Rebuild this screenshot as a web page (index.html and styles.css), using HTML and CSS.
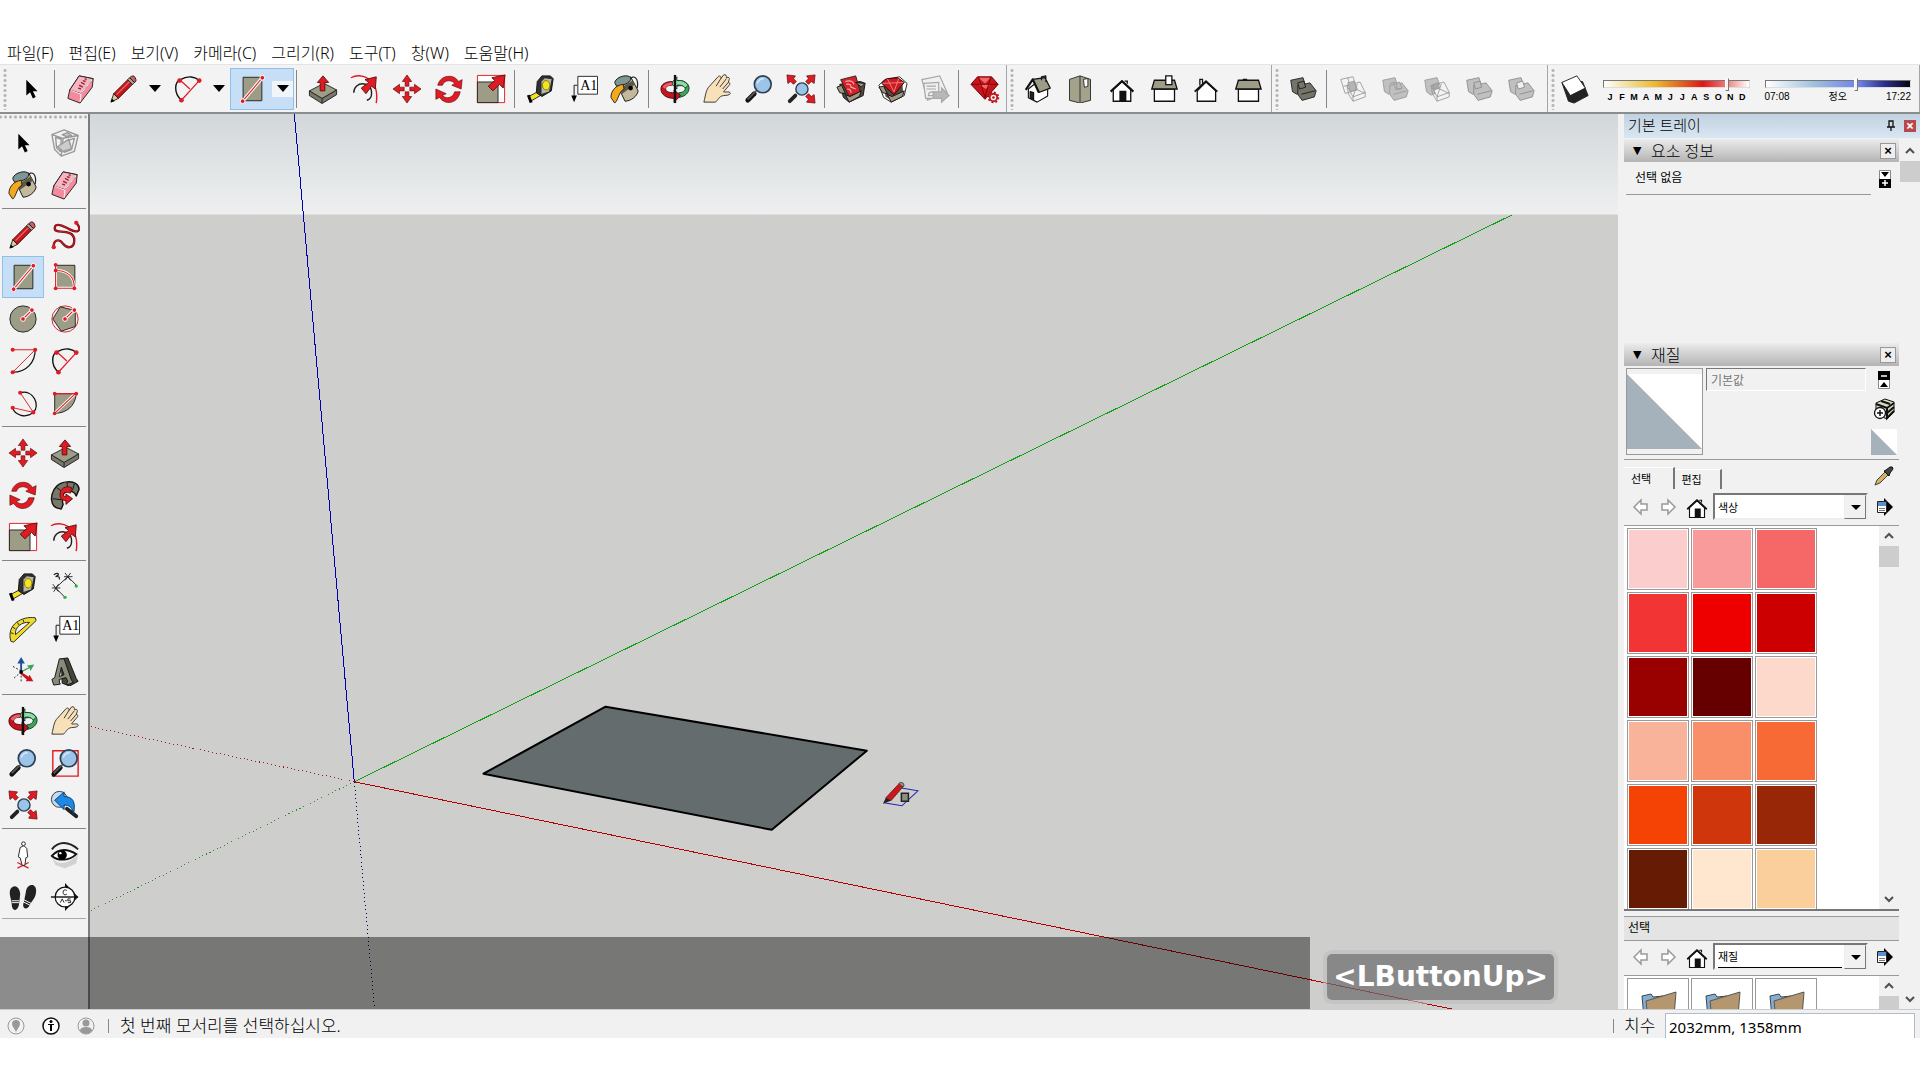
FILE: index.html
```html
<!DOCTYPE html>
<html lang="ko">
<head>
<meta charset="utf-8">
<title>모델러</title>
<link rel="stylesheet" href="styles.css">
</head>
<body>
<svg class="sprite" aria-hidden="true">
  <symbol id="cursor" viewBox="0 0 32 32"><path d="M11 6v17l4-3.500 3 6.500 3-1.500-3-6h5z"/></symbol>
  <symbol id="eraser" viewBox="0 0 32 32"><g stroke="#222" stroke-linejoin="round"><path fill="#f7899d" d="M14 2l15 3-1 9-13 17-13-5 2-9z"/><path fill="#f9b4c0" d="M14 2l15 3-13 16-12-4z"/><path fill="none" stroke="#fff" d="M5 17.500l11 4-1 8M16 21L28 6"/></g><path fill="none" stroke="#8c3040" stroke-width="1.500" d="M13 15l3 1M14 12l4 2M16 9l4 2M18 7l3 1M20 5l2 1"/></symbol>
  <symbol id="pencil" viewBox="0 0 32 32"><path fill="#d9c9a0" stroke="#222" d="M2 30l3-9 5 5z"/><path d="M2 30l1-4 3 3z"/><path fill="#c4161c" stroke="#301010" d="M5 21L20 6l5 5-15 15z"/><path stroke="#f06060" stroke-width="1.500" d="M8 22L22 8"/><path fill="#b0b0b0" stroke="#222" d="M20 6l2-2 5 5-2 2z"/><path fill="#c86060" stroke="#301010" d="M22 4q4-4 6 0t-1 5z"/></symbol>
  <symbol id="arc" viewBox="0 0 32 32"><path fill="none" stroke="#111" stroke-width="1.500" d="M9 28C0 20 2 8 8 6c8-5 16-3 20 1"/><path fill="none" stroke="#e01b24" stroke-width="1.300" d="M8 7l10 9M9 28L28 7"/><g fill="#e01b24"><circle cx="7" cy="7" r="2.500"/><circle cx="28" cy="7" r="2.500"/><circle cx="9" cy="28" r="2.500"/></g></symbol>
  <symbol id="rect" viewBox="0 0 32 32"><path fill="#9c9c87" stroke="#222" d="M6.500 3.500h20v25h-20z"/><path stroke="#fff" stroke-width="3.500" d="M6 29L27 4"/><path stroke="#e01b24" stroke-width="1.200" d="M6 29L27 4"/><g fill="#e01b24" stroke="#fff"><circle cx="6" cy="29" r="2.500"/><circle cx="27" cy="4" r="2.500"/></g></symbol>
  <symbol id="rrect" viewBox="0 0 32 32"><path fill="#9c9c87" stroke="#222" d="M6.500 3.500h20v25h-20z"/><path fill="none" stroke="#fff" stroke-width="3" d="M6 9c14 0 20 8 20 19H6V3"/><path fill="none" stroke="#e01b24" stroke-width="1.200" d="M6 9c14 0 20 8 20 19H6V3"/><g fill="#e01b24"><circle cx="6" cy="3" r="2"/><circle cx="6" cy="9" r="2"/><circle cx="6" cy="28" r="2"/><circle cx="26" cy="28" r="2"/></g></symbol>
  <symbol id="circle" viewBox="0 0 32 32"><circle cx="16" cy="16" r="14" fill="#9c9c87" stroke="#222"/><path stroke="#fff" stroke-width="3.500" d="M16 16l9-9"/><path stroke="#e01b24" stroke-width="1.200" d="M16 16l9-9"/><g fill="#e01b24" stroke="#fff"><circle cx="16" cy="16" r="2.500"/><circle cx="25.500" cy="6.500" r="2.500"/></g></symbol>
  <symbol id="polygon" viewBox="0 0 32 32"><circle cx="16" cy="16" r="14" fill="none" stroke="#e01b24"/><path fill="#9c9c87" stroke="#222" d="M27 7L11 3 3 16l9 13 15-5z"/><path stroke="#fff" stroke-width="3.500" d="M16 16l9-9"/><path stroke="#e01b24" stroke-width="1.200" d="M16 16l9-9"/><g fill="#e01b24" stroke="#fff"><circle cx="16" cy="16" r="2.500"/><circle cx="26" cy="6.500" r="2.500"/></g></symbol>
  <symbol id="arc2" viewBox="0 0 32 32"><path fill="none" stroke="#111" stroke-width="1.300" d="M29 4c0 13-9 24-24 24"/><path fill="none" stroke="#e01b24" d="M5 4h24L5 28"/><g fill="#e01b24"><circle cx="5" cy="4" r="2.200"/><circle cx="29" cy="4" r="2.200"/><circle cx="5" cy="28" r="2.200"/></g></symbol>
  <symbol id="arc3" viewBox="0 0 32 32"><path fill="none" stroke="#111" stroke-width="1.300" d="M13 5c14-4 22 14 14 21s-20 3-22-5"/><path fill="none" stroke="#e01b24" d="M13 5l14 21L5 21"/><g fill="#e01b24"><circle cx="13" cy="5" r="2.200"/><circle cx="27" cy="26" r="2.200"/><circle cx="5" cy="21" r="2.200"/></g></symbol>
  <symbol id="pie" viewBox="0 0 32 32"><path fill="#9c9c87" stroke="#222" d="M5 6h23c-1 13-10 21-23 21z"/><path stroke="#fff" stroke-width="3" d="M5 27L27 6"/><path fill="none" stroke="#e01b24" stroke-width="1.200" d="M5 6h22L5 27"/><g fill="#e01b24"><circle cx="5" cy="6" r="2"/><circle cx="28" cy="6" r="2"/><circle cx="5" cy="27" r="2"/></g></symbol>
  <symbol id="freehand" viewBox="0 0 32 32"><path fill="none" stroke="#701016" stroke-width="2.500" d="M28 3c8 9 0 11-7 7S5 2 5 9c0 5 9 2 16 5s6 14 0 15-7-6-11-7-7 2-6 8"/><path fill="none" stroke="#e01b24" d="M28 3c8 9 0 11-7 7S5 2 5 9c0 5 9 2 16 5s6 14 0 15-7-6-11-7-7 2-6 8"/><g fill="#e01b24"><circle cx="28" cy="3" r="2.300"/><circle cx="4" cy="29" r="2.300"/></g></symbol>
  <symbol id="push" viewBox="0 0 32 32"><path fill="#77776a" stroke="#222" stroke-linejoin="round" d="M1.500 18v5L15 31.500 30.500 22v-5L15 26z"/><path fill="#9c9c87" stroke="#222" stroke-linejoin="round" d="M1.500 18L17 10l13.500 7L15 26zM15 26v5"/><path fill="#e01b24" stroke="#601010" d="M16 2l6 7h-4v9h-5V9H10z"/></symbol>
  <symbol id="offset" viewBox="0 0 32 32"><path fill="none" stroke="#e01b24" stroke-width="1.500" d="M1 4c10-6 31 0 27 27"/><path fill="none" stroke="#222" stroke-width="1.500" d="M4 20c0-13 20-13 19 1 0 4-2 6-5 7"/><path fill="#e01b24" stroke="#601010" stroke-linejoin="round" d="M28 3l-1 13-4-3-6 8-5-6 8-6-4-3z"/></symbol>
  <symbol id="move" viewBox="0 0 32 32"><path fill="#e01b24" stroke="#601010" stroke-width=".7" d="M16 1l5 7h-3v5h-4V8h-3zM16 31l5-7h-3v-5h-4v5h-3zM1 16l7-5v3h5v4H8v3zM31 16l-7-5v3h-5v4h5v3z"/></symbol>
  <symbol id="rotate" viewBox="0 0 32 32"><path fill="#e01b24" stroke="#601010" stroke-width=".7" d="M4 12C7 0 22 0 26 8l4-2-1 10-10-4 3-2C19 6 11 6 9 12zM28 19c-3 14-17 14-22 6l-4 2V16l11 5-4 2c4 4 11 3 13-4z"/></symbol>
  <symbol id="scale" viewBox="0 0 32 32"><path fill="#fff" stroke="#e01b24" d="M1.500 1.500h29v29h-29z"/><path fill="#9c9c87" stroke="#222" d="M1.500 8.500h22v22h-22z"/><path fill="#e01b24" stroke="#601010" stroke-linejoin="round" d="M31 1l-2 14-4-4-7 7-5-5 7-6-3-3z"/></symbol>
  <symbol id="tape" viewBox="0 0 32 32"><path fill="#f4e520" stroke="#222" d="M3 24l11-6 3 4L5 29z"/><path d="M1 23l3-1 3 8-3 1z"/><path fill="#303030" stroke="#111" d="M12 8l5-6h9l3 3-2 13-10 6-6-4z"/><path fill="#b8b8a8" stroke="#222" d="M16 8l4-4 8 1-3 14-9 3z"/><ellipse cx="21.500" cy="12" rx="4" ry="5" fill="#f4e520" stroke="#80780c"/></symbol>
  <symbol id="text" viewBox="0 0 32 32"><path fill="#fff" stroke="#222" d="M10.500 2.500h21v19h-21z"/><path fill="none" stroke="#111" d="M10 12H6.500v12"/><path d="M3.500 23h6l-3 7z"/><path stroke="none" d="M0 0"/><text class="mark" x="13" y="17">A1</text></symbol>
  <symbol id="paint" viewBox="0 0 32 32"><path fill="none" stroke="#222" stroke-width="1.300" d="M21 6c4-6 10-2 8 9"/><path fill="#c3b899" stroke="#111" stroke-linejoin="round" d="M6 8l16-5 8 15c-1 6-8 11-14 11z"/><path fill="#5c5848" d="M10 16l14-9 3 4-14 10z"/><path fill="#7d9696" stroke="#111" d="M5 9c2-7 15-9 17-5 1 4-5 8-15 9z"/><path fill="#f2a91c" stroke="#222" d="M14 11C6 12 1 18 1 25l4 6c4-3 4-12 10-15z"/><circle cx="22" cy="15" r="2.500"/></symbol>
  <symbol id="orbit" viewBox="0 0 32 32"><path fill="#3ba55c" stroke="#12401f" d="M17 7c8-1 14 3 14 8s-4 9-11 10v-5c4 0 7-2 7-5s-4-3-10-2z"/><path fill="#8fdcab" stroke="#12401f" d="M18 3l-6 7 6 6v-4q6-1 9 3l3-3q-4-6-12-5z"/><path fill="#c4161c" stroke="#4a0c10" d="M13 8C6 8 1 11 1 16c0 6 6 10 14 10v4l7-7-7-6v3c-5 0-9-1-9-4s3-4 7-4z"/><path fill="#e86070" d="M13 9C7 9 3 12 3 14l3 2c0-3 3-4 7-4z"/><path stroke="#111" stroke-width="2.500" d="M16 1v30"/></symbol>
  <symbol id="hand" viewBox="0 0 32 32"><path fill="#f8e1b8" stroke="#333" stroke-linejoin="round" d="M2 30c2-8 2-13 6-17L17 3c2-2 4 0 3 2l3-4c2-1 4 1 3 3 2-1 4 0 3 2l-1 3c2 0 2 2 1 3l-6 7c3 1 6-1 7 1s-3 3-7 3c-6 1-5 5-9 7z"/><path fill="none" stroke="#333" d="M20 5l-5 8M26 5l-7 9M28 9l-6 7"/></symbol>
  <symbol id="zoom" viewBox="0 0 32 32"><path stroke="#111" stroke-width="5" stroke-linecap="round" d="M4 28l7-7"/><path stroke="#555" stroke-width="2" d="M4 27l9-9"/><circle cx="20" cy="11" r="9" fill="#9cc3e8" stroke="#2c4052" stroke-width="1.800"/><path fill="none" stroke="#d8ebfa" stroke-width="1.500" d="M14 10q2-5 7-5"/></symbol>
  <symbol id="extents" viewBox="0 0 32 32"><path stroke="#222" stroke-width="4" stroke-linecap="round" d="M4 29l6-6"/><circle cx="17" cy="16" r="6.500" fill="#9cc3e8" stroke="#2c4052" stroke-width="1.500"/><path fill="#e01b24" stroke="#601010" stroke-width=".8" d="M1 1l9 1-2 3 3 3-3 3-3-3-3 2zM31 1l-9 1 2 3-3 3 3 3 3-3 3 2zM31 31l-9-1 2-3-3-3 3-3 3 3 3-2z"/></symbol>
  <symbol id="boxget" viewBox="0 0 32 32"><path fill="#544a40" stroke="#111" stroke-linejoin="round" d="M4 11l4 14 6 5 15-7 2-13-5-2z"/><path fill="#d5232b" stroke="#222" d="M5 6l16-4 5 17-12 5z"/><path fill="none" stroke="#f7b0b0" stroke-width="1.300" d="M10 8q8-2 9 3M11 11q5-1 5 3l5 2M12 16q4 0 4 4"/><path fill="#a09684" stroke="#111" stroke-linejoin="round" d="M21 9l10 1-4 4zM1 14l5-2 4 9-6-1zM10 22l5 2 12-6-2 6-11 6z"/></symbol>
  <symbol id="boxgem" viewBox="0 0 32 32"><path fill="#fff" stroke="#222" stroke-linejoin="round" d="M1 12l6-6 16-3 8 7-3 13-14 7-8-5z"/><path fill="#544a40" d="M6 13l20-3 1 12-13 6-6-4z"/><path fill="#c81a22" stroke="#300" d="M4 10l5-5 12-1 7 5-11 13z"/><path fill="none" stroke="#f58080" d="M5 10l22-1M10 5l7 14 5-14"/><path fill="#a09684" stroke="#111" stroke-linejoin="round" d="M1 14l5-1 4 8-5-1zM10 22l5 2 13-6-2 6-12 6z"/></symbol>
  <symbol id="layout" viewBox="0 0 32 32"><g fill="#f0f0f0" stroke="#a8a8a8" stroke-width="1.300"><path d="M2 6l19-4 8 18-21 8z"/><path d="M4 10l16-1v17H6z"/><path d="M7 13h10M7 16h10M9 23q0-4 4-4t3 4z"/><path fill="#b8b8b8" d="M14 19h9v-4l8 8-8 7v-4h-9z"/></g></symbol>
  <symbol id="ruby" viewBox="0 0 32 32"><path fill="#c8141c" stroke="#600" d="M1 11l7-8h15l7 8-14 16z"/><path fill="#ee6a6a" d="M9 4l7 6 6-6zM9 11h13l-5 5z"/><path fill="none" stroke="#800" d="M2 11h27M9 3l7 22 6-22"/><circle cx="25" cy="25" r="4" fill="#f2f2f2" stroke="#c8141c" stroke-width="2"/><circle cx="25" cy="25" r="5.500" fill="none" stroke="#a01018" stroke-width="1.500" stroke-dasharray="2 2.300"/><circle cx="25" cy="25" r="1.300" fill="#a01018"/></symbol>
  <symbol id="iso" viewBox="0 0 32 32"><g stroke="#111" stroke-width="1.300" stroke-linejoin="round"><path fill="#fff" d="M5 16v10l10 5 12-7V14L15 8z"/><path fill="#9c9c87" d="M10 5l14-2 6 12-13 5zM20 6V2l5-1v7"/><path fill="none" stroke-width="2.500" d="M2 17l8-12 7 15"/><path fill="#222" d="M7 19l4 1v8l-4-2z"/></g></symbol>
  <symbol id="topv" viewBox="0 0 32 32"><g stroke="#222" stroke-linejoin="round"><path fill="#a3a38c" d="M4 5l12-4 12 4v24l-12 3-12-3z"/><path d="M16 1v30"/><path fill="#fff" d="M20 5l5-1v9l-4 1z"/></g></symbol>
  <symbol id="home" viewBox="0 0 32 32"><path fill="#fff" stroke="#111" stroke-width="1.500" d="M6 16l10-9 10 9v14H6zM22 10V7h-3"/><path fill="none" stroke="#111" stroke-width="2.500" d="M3 19L16 7l13 12"/><path fill="#111" d="M13 18h8v12h-8z"/></symbol>
  <symbol id="right" viewBox="0 0 32 32"><path fill="#fff" stroke="#111" stroke-width="1.500" d="M5 16h23v14H5z"/><path fill="#9c9c87" stroke="#111" stroke-width="1.500" d="M5 6h23l3 10H2z"/><path fill="#fff" stroke="#111" stroke-width="1.500" d="M18 1h7v10h-7z"/></symbol>
  <symbol id="back" viewBox="0 0 32 32"><path fill="#fff" stroke="#111" stroke-width="1.500" d="M6 18L16 8l11 10v12H6zM9 12V5h3v5"/><path fill="none" stroke="#111" stroke-width="2" d="M3 19L16 7l13 12"/></symbol>
  <symbol id="left" viewBox="0 0 32 32"><path fill="#fff" stroke="#111" stroke-width="1.500" d="M5 16h23v14H5z"/><path fill="#9c9c87" stroke="#111" stroke-width="1.500" d="M5 6h23l3 10H2zM10 5h5"/></symbol>
  <symbol id="solid" viewBox="0 0 32 32"><g fill="currentColor" stroke="var(--edge)" stroke-linejoin="round"><path d="M2 6l14-3 4 13-11 6-5-3z"/><path d="M10 12l14-3 7 9-2 7-14 4-5-7z"/><path d="M10 9l7-2 2 7-7 2zM14 22l16-4"/></g></symbol>
  <symbol id="solidwire" viewBox="0 0 32 32"><g fill="none" stroke="#999" stroke-linejoin="round"><path d="M2 5l14-3 5 15-14 4zM9 12l15-4 6 12-14 5zM16 25v5l14-5v-5M5 13l12-3M10 3l4 16M9 12l2 10 5 8M21 10l-2 6 11 5M16 25l3-9"/><path fill="#b5b5b5" d="M10 9l7-2 3 9-7 3z"/></g></symbol>
  <symbol id="solidin" viewBox="0 0 32 32"><g fill="#c0c0c0" stroke="#999" stroke-linejoin="round"><path d="M2 6l14-3 4 13-11 6-5-3z"/><path d="M10 12l14-3 7 9-2 7-14 4-5-7z"/><path d="M14 22l16-4M15 10l6-2 3 7-7 2zM18 9v6l5 1M10 10l6-2"/></g></symbol>
  <symbol id="solidsub" viewBox="0 0 32 32"><g fill="none" stroke="#999" stroke-linejoin="round"><path fill="#c0c0c0" d="M2 6l14-3 3 8-8 2 3 8-5 2-5-4z"/><path d="M9 12l15-4 6 12-14 5zM16 25v5l14-5v-5M9 12l2 10 5 8M21 10l-2 6 11 5M16 25l3-9"/><path fill="#a8a8a8" d="M11 11l6-2 2 6-6 2z"/></g></symbol>
  <symbol id="solidsplit" viewBox="0 0 32 32"><g fill="#c0c0c0" stroke="#8c8c8c" stroke-linejoin="round"><path d="M2 6l14-3 4 13-11 6-5-3z"/><path d="M10 12l14-3 7 9-2 7-14 4-5-7z"/><path d="M14 22l16-4"/><path fill="#f0f0f0" d="M11 9l7-2 2 7-7 2z"/></g></symbol>
  <symbol id="sunbox" viewBox="0 0 32 32"><path fill="#222" stroke="#222" d="M2 9l7 20 6 2 15-8-6-15z"/><path fill="#fff" stroke="#222" d="M2 9l16-7 9 13-16 8z"/></symbol>
  <symbol id="component" viewBox="0 0 32 32"><g fill="none" stroke="#999" stroke-width="1.500" stroke-linejoin="round"><path d="M2 7l13-5 15 6-4 17-14 5L5 23zM2 7l12 4 16-3M14 11l-2 19M6 10l6 2-1 13-4-4zM17 14l9-3-3 12-8 3z"/><path fill="#ccc" d="M8 20l12-8 3 10-9 3zM13 7l6-2 4 3-6 1z"/></g></symbol>
  <symbol id="follow" viewBox="0 0 32 32"><path fill="#77776a" stroke="#111" stroke-width="1.500" stroke-linejoin="round" d="M8 30C-3 27 0 3 18 2c8-1 13 3 13 8l-3 7c-3-9-19-7-14 9l-2 5z"/><path fill="none" stroke="#111" d="M3 20l9 1M7 8l7 5M18 2l1 8M26 4l-2 7"/><path fill="#e01b24" stroke="#601010" d="M23 8C10 3 6 22 17 22v4l7-6-7-5v3c-5-1-4-7 5-4z"/></symbol>
  <symbol id="dim" viewBox="0 0 32 32"><path fill="none" stroke="#222" d="M6 17l13-12M6 17l10 10M19 5l9 9M2 17h9M15 5h9M3 13l6 8M9 13l-5 8M16 1l6 8M22 1l-6 8"/><path fill="none" stroke="#222" stroke-width="1.300" d="M4 3q5-3 5 0l-3 2q5-1 4 3"/><circle cx="16" cy="27" r="1.800" fill="#2eb34a"/><circle cx="28" cy="15" r="1.800" fill="#2eb34a"/></symbol>
  <symbol id="protractor" viewBox="0 0 32 32"><path fill="#eedb2c" stroke="#222" stroke-linejoin="round" d="M3 29C-2 11 15 2 29 4l1 3L6 30zM8 22C7 14 15 8 23 9z" fill-rule="evenodd"/><path fill="none" stroke="#222" d="M3 20l3 1M5 14l3 2M10 9l2 3M16 6l1 3"/></symbol>
  <symbol id="axes" viewBox="0 0 32 32"><path stroke="#222" stroke-dasharray="2 2" d="M14 16L5 11M14 17L6 24M14 17v12"/><path fill="#1d4f9c" d="M13 16V8h-3l4-7 4 7h-3v8z"/><path fill="#3ba55c" d="M14 16l8-4-2-2 8-1-4 7-1-3-8 4z"/><path fill="#c4161c" d="M14 17l8 5 1-2 4 7h-8l1-2-7-6z"/><circle cx="14" cy="17" r="2"/></symbol>
  <symbol id="text3d" viewBox="0 0 32 32"><path fill="#44443c" stroke="#111" stroke-linejoin="round" d="M12 3l7-1 9 22 2 3-9 5-8-3z"/><path fill="#8a8a7a" stroke="#111" stroke-linejoin="round" fill-rule="evenodd" d="M2 25l3-2 5-20h5l8 23 2 2-7 3v-2l1-2-2-4-7 2v3l1 2-7 1zM12 12l-2 10 5-2z"/></symbol>
  <symbol id="zoomwin" viewBox="0 0 32 32"><path fill="none" stroke="#e01b24" stroke-width="1.500" d="M3 3h27v27H3z"/><use href="#zoom"/></symbol>
  <symbol id="previous" viewBox="0 0 32 32"><circle cx="10" cy="10" r="8.500" fill="#c6dcee" stroke="#334"/><path stroke="#222" stroke-width="4" stroke-linecap="round" d="M18 20l10 8"/><path fill="#1e88e5" stroke="#0b3c6b" d="M5 11l10-9v5c9 0 13 5 10 19-1-7-4-10-10-10v5z"/></symbol>
  <symbol id="person" viewBox="0 0 32 32"><path fill="none" stroke="#e01b24" stroke-width="1.300" d="M10 24l12 6M22 24l-12 6"/><path fill="#fff" stroke="#222" d="M13 8l4-2 3 3 1 9-2 1-1 8h-3l-2-8-2-1z"/><circle cx="16.500" cy="4" r="2" fill="#fff" stroke="#222"/></symbol>
  <symbol id="eye" viewBox="0 0 32 32"><path fill="none" stroke="#222" stroke-width="2" d="M2 10c7-9 18-9 28 0"/><path fill="#bbb" d="M2 19c6 8 17 8 28-4l-2 10-12 5-10-3z" opacity=".6"/><path fill="#fff" stroke="#111" stroke-width="2" d="M2 17c7-8 16-8 26-2-7 7-19 8-26 2z"/><circle cx="13" cy="16" r="5"/><circle cx="11" cy="14" r="1.300" fill="#fff"/></symbol>
  <symbol id="feet" viewBox="0 0 32 32"><path fill="#222" d="M3 7c5-6 10 0 10 6l-1 9c-1 10-8 10-8 2 0-5-4-12-1-17zM19 11c1-10 11-10 11-2 0 8-4 10-7 16-3 6-9 3-6-4z"/><path stroke="#fff" d="M4 20h8M4 22h8M17 19l8 4M16 21l8 4"/></symbol>
  <symbol id="section" viewBox="0 0 32 32"><path fill="#111" d="M16 1l14 15-14 15z"/><circle cx="16" cy="16" r="10.500" fill="#fff" stroke="#111" stroke-width="1.300"/><path stroke="#111" stroke-width="1.500" d="M1 16h29"/><path fill="none" stroke="#222" d="M18 9q-4-2-4 2t4 2M11 22l2-4 2 4M16 20h2M22 18h-3v2h3v2h-3"/></symbol>
  <symbol id="prev" viewBox="0 0 20 20"><path fill="#fff" stroke="#999" stroke-width="1.500" d="M3 10l7-7v4h6v6h-6v4z"/></symbol>
  <symbol id="next" viewBox="0 0 20 20"><path fill="#fff" stroke="#999" stroke-width="1.500" d="M17 10l-7-7v4H4v6h6v4z"/></symbol>
  <symbol id="details" viewBox="0 0 20 20"><path d="M9 1l9 9-9 9z"/><path fill="#fff" stroke="#222" d="M2.500 4.500h9v11h-9z"/><path fill="#5b8fd0" d="M3 5h8v4H3z"/><path stroke="#777" d="M4 11.500h6M4 13.500h6"/></symbol>
  <symbol id="up" viewBox="0 0 20 20"><path fill="none" stroke="#505050" stroke-width="2" d="M6 12l4-4 4 4"/></symbol>
  <symbol id="down" viewBox="0 0 20 20"><path fill="none" stroke="#505050" stroke-width="2" d="M6 8l4 4 4-4"/></symbol>
  <symbol id="folder" viewBox="0 0 40 40"><path fill="#82afd3" stroke="#444" d="M2 7l9-2 2 3 10-1v33H5z"/><path fill="#b4976f" stroke="#555" d="M6 12l30-9-3 37H9z"/></symbol>
</svg>

<div class="app">
  <nav class="menu">
    <a href="#">파일(F)</a><a href="#">편집(E)</a><a href="#">보기(V)</a><a href="#">카메라(C)</a><a href="#">그리기(R)</a><a href="#">도구(T)</a><a href="#">창(W)</a><a href="#">도움말(H)</a>
  </nav>

  <header class="toolbar">
    <div class="group">
      <i class="grip"></i>
      <button class="tool" aria-label="선택"><svg><use href="#cursor"/></svg></button>
      <i class="sep"></i>
      <button class="tool" aria-label="지우개"><svg><use href="#eraser"/></svg></button>
      <div class="split"><button class="tool" aria-label="선"><svg><use href="#pencil"/></svg></button><button class="drop" aria-label="선 도구"></button></div>
      <div class="split"><button class="tool" aria-label="호"><svg><use href="#arc"/></svg></button><button class="drop" aria-label="호 도구"></button></div>
      <div class="split active"><button class="tool" aria-label="직사각형"><svg><use href="#rect"/></svg></button><button class="drop" aria-label="도형 도구"></button></div>
      <i class="sep"></i>
      <button class="tool" aria-label="밀기/끌기"><svg><use href="#push"/></svg></button>
      <button class="tool" aria-label="오프셋"><svg><use href="#offset"/></svg></button>
      <button class="tool" aria-label="이동"><svg><use href="#move"/></svg></button>
      <button class="tool" aria-label="회전"><svg><use href="#rotate"/></svg></button>
      <button class="tool" aria-label="배율"><svg><use href="#scale"/></svg></button>
      <i class="sep"></i>
      <button class="tool" aria-label="줄자"><svg><use href="#tape"/></svg></button>
      <button class="tool" aria-label="텍스트"><svg><use href="#text"/></svg></button>
      <button class="tool" aria-label="페인트"><svg><use href="#paint"/></svg></button>
      <i class="sep"></i>
      <button class="tool" aria-label="궤도"><svg><use href="#orbit"/></svg></button>
      <button class="tool" aria-label="팬"><svg><use href="#hand"/></svg></button>
      <button class="tool" aria-label="확대"><svg><use href="#zoom"/></svg></button>
      <button class="tool" aria-label="전체 보기"><svg><use href="#extents"/></svg></button>
      <i class="sep"></i>
      <button class="tool" aria-label="모델 가져오기"><svg><use href="#boxget"/></svg></button>
      <button class="tool" aria-label="확장 저장소"><svg><use href="#boxgem"/></svg></button>
      <button class="tool" aria-label="레이아웃"><svg><use href="#layout"/></svg></button>
      <i class="sep"></i>
      <button class="tool" aria-label="확장 관리자"><svg><use href="#ruby"/></svg></button>
    </div>
    <div class="group views">
      <i class="grip"></i>
      <button class="tool" aria-label="등각"><svg><use href="#iso"/></svg></button>
      <button class="tool" aria-label="위"><svg><use href="#topv"/></svg></button>
      <button class="tool" aria-label="정면"><svg><use href="#home"/></svg></button>
      <button class="tool" aria-label="오른쪽"><svg><use href="#right"/></svg></button>
      <button class="tool" aria-label="뒤"><svg><use href="#back"/></svg></button>
      <button class="tool" aria-label="왼쪽"><svg><use href="#left"/></svg></button>
    </div>
    <div class="group solids">
      <i class="grip"></i>
      <button class="tool dark" aria-label="외부 쉘"><svg><use href="#solid"/></svg></button>
      <i class="sep"></i>
      <button class="tool" aria-label="교차"><svg><use href="#solidwire"/></svg></button>
      <button class="tool" aria-label="결합"><svg><use href="#solidin"/></svg></button>
      <button class="tool" aria-label="빼기"><svg><use href="#solidsub"/></svg></button>
      <button class="tool" aria-label="트림"><svg><use href="#solid"/></svg></button>
      <button class="tool" aria-label="분할"><svg><use href="#solidsplit"/></svg></button>
    </div>
    <div class="group shadows">
      <i class="grip"></i>
      <button class="tool" aria-label="그림자"><svg><use href="#sunbox"/></svg></button>
      <div class="slider">
        <input class="date" type="range" min="0" max="100" value="86" aria-label="날짜">
        <div class="months"><span>J</span><span>F</span><span>M</span><span>A</span><span>M</span><span>J</span><span>J</span><span>A</span><span>S</span><span>O</span><span>N</span><span>D</span></div>
      </div>
      <div class="slider">
        <input class="time" type="range" min="0" max="100" value="63" aria-label="시간">
        <div class="hours"><span>07:08</span><span>정오</span><span>17:22</span></div>
      </div>
    </div>
  </header>

  <main class="work">
    <aside class="palette">
      <div class="pgroup">
        <button class="tool" aria-label="선택"><svg><use href="#cursor"/></svg></button><button class="tool" aria-label="구성 요소"><svg><use href="#component"/></svg></button>
        <button class="tool" aria-label="페인트"><svg><use href="#paint"/></svg></button><button class="tool" aria-label="지우개"><svg><use href="#eraser"/></svg></button>
      </div>
      <div class="pgroup">
        <button class="tool" aria-label="선"><svg><use href="#pencil"/></svg></button><button class="tool" aria-label="자유곡선"><svg><use href="#freehand"/></svg></button>
        <button class="tool active" aria-label="직사각형"><svg><use href="#rect"/></svg></button><button class="tool" aria-label="회전된 직사각형"><svg><use href="#rrect"/></svg></button>
        <button class="tool" aria-label="원"><svg><use href="#circle"/></svg></button><button class="tool" aria-label="다각형"><svg><use href="#polygon"/></svg></button>
        <button class="tool" aria-label="호"><svg><use href="#arc2"/></svg></button><button class="tool" aria-label="2점 호"><svg><use href="#arc"/></svg></button>
        <button class="tool" aria-label="3점 호"><svg><use href="#arc3"/></svg></button><button class="tool" aria-label="파이"><svg><use href="#pie"/></svg></button>
      </div>
      <div class="pgroup">
        <button class="tool" aria-label="이동"><svg><use href="#move"/></svg></button><button class="tool" aria-label="밀기/끌기"><svg><use href="#push"/></svg></button>
        <button class="tool" aria-label="회전"><svg><use href="#rotate"/></svg></button><button class="tool" aria-label="따라가기"><svg><use href="#follow"/></svg></button>
        <button class="tool" aria-label="배율"><svg><use href="#scale"/></svg></button><button class="tool" aria-label="오프셋"><svg><use href="#offset"/></svg></button>
      </div>
      <div class="pgroup">
        <button class="tool" aria-label="줄자"><svg><use href="#tape"/></svg></button><button class="tool" aria-label="치수"><svg><use href="#dim"/></svg></button>
        <button class="tool" aria-label="각도기"><svg><use href="#protractor"/></svg></button><button class="tool" aria-label="텍스트"><svg><use href="#text"/></svg></button>
        <button class="tool" aria-label="축"><svg><use href="#axes"/></svg></button><button class="tool" aria-label="3D 텍스트"><svg><use href="#text3d"/></svg></button>
      </div>
      <div class="pgroup">
        <button class="tool" aria-label="궤도"><svg><use href="#orbit"/></svg></button><button class="tool" aria-label="팬"><svg><use href="#hand"/></svg></button>
        <button class="tool" aria-label="확대"><svg><use href="#zoom"/></svg></button><button class="tool" aria-label="창 확대"><svg><use href="#zoomwin"/></svg></button>
        <button class="tool" aria-label="전체 보기"><svg><use href="#extents"/></svg></button><button class="tool" aria-label="이전"><svg><use href="#previous"/></svg></button>
      </div>
      <div class="pgroup">
        <button class="tool" aria-label="카메라 배치"><svg><use href="#person"/></svg></button><button class="tool" aria-label="둘러보기"><svg><use href="#eye"/></svg></button>
        <button class="tool" aria-label="걷기"><svg><use href="#feet"/></svg></button><button class="tool" aria-label="단면"><svg><use href="#section"/></svg></button>
      </div>
    </aside>

    <section class="viewport">
      <svg class="scene" viewBox="91 115 1528 894" preserveAspectRatio="xMinYMin slice">
        <g fill="none" stroke-width="1" shape-rendering="crispEdges">
          <path stroke="#0000b0" d="M295 114L355 782"/>
          <path stroke="#000060" stroke-dasharray="1 3" d="M355 782L375 1006"/>
          <path stroke="#14a014" d="M355 782L1511 216"/>
          <path stroke="#2c8c2c" stroke-dasharray="1 3" d="M355 782L91 911"/>
          <path stroke="#b40000" d="M355 782L1451 1009"/>
          <path stroke="#a01818" stroke-dasharray="1 3" d="M355 782L91 727"/>
        </g>
        <path fill="#646c6e" stroke="#000" stroke-width="2" stroke-linejoin="round" d="M606 707L867 751 772 830 484 774z"/>
        <path fill="none" stroke="#2020b8" d="M884 803l18 3 16-15-18-3"/>
        <path fill="#8f8f80" stroke="#222" stroke-width="1.500" d="M901.500 793.500h7v8h-7z"/>
        <path fill="#c81a1e" stroke="#701010" stroke-width=".8" d="M886 798l14-15 4 3-13 15z"/>
        <path fill="#222" d="M883 804l3-6 5 3z"/><path fill="#999" stroke="#333" stroke-width=".8" d="M900 783q4-1 4 3l-1 1-4-3z"/>
      </svg>
      <div class="keycast">&lt;LButtonUp&gt;</div>
    </section>

    <aside class="tray">
      <div class="tray-title"><span>기본 트레이</span>
        <button class="pin" aria-label="고정"><svg viewBox="0 0 10 12"><path fill="none" stroke="#111" stroke-width="1.300" d="M3 1h4v6H3zM1 7h8M5 7v4"/></svg></button>
        <button class="exit" aria-label="닫기">×</button></div>
      <div class="tray-body">
        <div class="panels">
          <h2 class="head"><span class="tri">▼</span>요소 정보<button aria-label="요소 정보 닫기">×</button></h2>
          <div class="entity">
            <p>선택 없음</p>
            <button class="toggle" aria-label="자세히"><svg viewBox="0 0 12 18"><path fill="#fff" stroke="#888" d="M.5 .5h11v17H.500z"/><path d="M2 2h8L6 7zM0 9h12v9H0z"/><path stroke="#fff" stroke-width="1.500" d="M3 13h6M6 10v6"/></svg></button>
          </div>
          <h2 class="head"><span class="tri">▼</span>재질<button aria-label="재질 닫기">×</button></h2>
          <div class="material">
            <div class="preview"><svg viewBox="0 0 75 75" preserveAspectRatio="none"><path fill="#fff" d="M0 0h75v75z"/><path fill="#a5b2bb" d="M0 0l75 75H0z"/></svg></div>
            <input type="text" value="기본값" disabled aria-label="재질 이름">
            <div class="side">
              <button aria-label="접기"><svg width="12" height="18" viewBox="0 0 12 18"><path fill="#fff" stroke="#888" d="M.5 .5h11v17H.500z"/><path d="M0 0h12v9H0zM2 16h8L6 11z"/><path stroke="#fff" stroke-width="1.500" d="M3 5h6"/></svg></button>
              <button aria-label="재질 만들기"><svg width="24" height="24" viewBox="0 0 24 24"><path stroke="#111" fill="#d8d8c0" d="M4 6l9-4 9 3v10l-7 7-11-5z"/><path fill="none" stroke="#111" stroke-width="2" d="M4 7l11 4 7-5M4 12l11 4 7-6M15 11v10l7-7M9 4l9 3"/><circle cx="8" cy="16" r="5.500" fill="#fff" stroke="#111" stroke-width="1.300"/><path stroke="#111" stroke-width="1.500" d="M5 16h6M8 13v6"/></svg></button>
              <button aria-label="기본 재질"><svg width="26" height="26" viewBox="0 0 26 26"><path fill="#fff" d="M0 0h26v26z"/><path fill="#a5b2bb" d="M0 0l26 26H0z"/></svg></button>
            </div>
          </div>
          <div class="tabs">
            <button class="on">선택</button><button>편집</button>
            <svg class="dropper" viewBox="0 0 22 22"><path fill="#d8b060" stroke="#444" d="M2 20l2-5 8-8 3 3-8 8z"/><path fill="#444" stroke="#111" d="M11 6l2-1 4-3q3-1 3 2l-3 4-1 3z"/></svg>
          </div>
          <div class="navrow">
            <button aria-label="뒤로"><svg><use href="#prev"/></svg></button><button aria-label="앞으로"><svg><use href="#next"/></svg></button><button class="homebtn" aria-label="모델 내"><svg><use href="#home"/></svg></button>
            <div class="combo"><select aria-label="라이브러리"><option>색상</option></select></div>
            <button class="more" aria-label="자세히"><svg><use href="#details"/></svg></button>
          </div>
          <div class="list">
            <div class="swatches">
              <button class="c1" aria-label="색상 1"></button><button class="c2" aria-label="색상 2"></button><button class="c3" aria-label="색상 3"></button>
              <button class="c4" aria-label="색상 4"></button><button class="c5" aria-label="색상 5"></button><button class="c6" aria-label="색상 6"></button>
              <button class="c7" aria-label="색상 7"></button><button class="c8" aria-label="색상 8"></button><button class="c9" aria-label="색상 9"></button>
              <button class="c10" aria-label="색상 10"></button><button class="c11" aria-label="색상 11"></button><button class="c12" aria-label="색상 12"></button>
              <button class="c13" aria-label="색상 13"></button><button class="c14" aria-label="색상 14"></button><button class="c15" aria-label="색상 15"></button>
              <button class="c16" aria-label="색상 16"></button><button class="c17" aria-label="색상 17"></button><button class="c18" aria-label="색상 18"></button>
            </div>
            <div class="scroll"><svg><use href="#up"/></svg><i></i><svg class="end"><use href="#down"/></svg></div>
          </div>
          <div class="subhead">선택</div>
          <div class="navrow">
            <button aria-label="뒤로"><svg><use href="#prev"/></svg></button><button aria-label="앞으로"><svg><use href="#next"/></svg></button><button class="homebtn" aria-label="모델 내"><svg><use href="#home"/></svg></button>
            <div class="combo ruled"><select aria-label="재질 라이브러리"><option>재질</option></select></div>
            <button class="more" aria-label="자세히"><svg><use href="#details"/></svg></button>
          </div>
          <div class="list short">
            <div class="swatches folders">
              <button aria-label="폴더 1"><svg><use href="#folder"/></svg></button><button aria-label="폴더 2"><svg><use href="#folder"/></svg></button><button aria-label="폴더 3"><svg><use href="#folder"/></svg></button>
            </div>
            <div class="scroll"><svg><use href="#up"/></svg><i></i></div>
          </div>
        </div>
        <div class="scroll outer"><svg><use href="#up"/></svg><i></i><svg class="end"><use href="#down"/></svg></div>
      </div>
    </aside>
    <div class="caption-band"></div>
  </main>

  <footer class="status">
    <svg viewBox="0 0 18 18"><circle cx="9" cy="9" r="8" fill="none" stroke="#999"/><path fill="#999" d="M9 15C7 11 5 9 5 7q0-4 4-4t4 4c0 2-2 4-4 8z"/></svg>
    <svg viewBox="0 0 18 18"><circle cx="9" cy="9" r="8" fill="#fff" stroke="#111" stroke-width="1.500"/><circle cx="9" cy="4.500" r="1.500"/><path d="M6 7h6v1h-2v6H8V8H6z"/></svg>
    <svg viewBox="0 0 18 18"><circle cx="9" cy="9" r="8" fill="#f1f1f1" stroke="#999"/><circle cx="9" cy="6" r="3.500" fill="#999"/><path fill="#999" d="M3 14q0-4 6-4t6 4q-6 6-12 0z"/></svg>
    <i class="bar"></i>
    <span class="hint">첫 번째 모서리를 선택하십시오.</span>
    <i class="bar"></i>
    <label for="measure">치수</label>
    <input id="measure" type="text" value="2032mm, 1358mm">
  </footer>
</div>
</body>
</html>
```
FILE: styles.css
```css
* { box-sizing: border-box; }
body {
  margin: 0;
  background: #fff;
  color: #000;
  font: 15px/20px "Noto Sans", "Noto Sans CJK KR", sans-serif;
}
button { padding: 0; border: 0; background: none; font: inherit; color: inherit; }
h2, p { margin: 0; }
.sprite { display: none; }
.mark { font: 15px "Liberation Serif", serif; }

.app {
  display: flex;
  flex-direction: column;
  height: 100vh;
  padding: 42px 0;
}

/* Menu */
.menu { display: flex; gap: 15px; height: 22px; padding: 0 7px; flex: none; }
.menu a { color: inherit; text-decoration: none; font-size: 16px; font-weight: 300; line-height: 22px; white-space: nowrap; }

/* Top toolbar */
.toolbar {
  display: flex;
  flex: none;
  height: 50px;
  background: #f3f3f3;
  border-top: 1px solid #e4e4e4;
  border-bottom: 2px solid #8b8d8c;
}
.group { display: flex; align-items: center; flex: none; border-right: 1px solid #a5a5a5; }
.grip { width: 10px; height: 42px; flex: none; background: radial-gradient(circle, #b4b4b4 1px, transparent 2px) 3px 0 / 4px 5px repeat-y; }
.sep { width: 1px; height: 38px; margin: 0 5px 0 2px; background: #858585; }
.tool { display: flex; align-items: center; justify-content: center; width: 42px; height: 42px; }
.tool svg { width: 30px; height: 30px; }
.views { padding-right: 2px; }
.views svg, .solids svg { width: 28px; height: 28px; }
.solids { padding-right: 5px; color: #c0c0c0; --edge: #8c8c8c; }
.solids .dark { color: #74746a; --edge: #1c1c1c; }
.split { display: flex; width: 64px; height: 42px; border: 1px solid transparent; }
.split .tool { width: 41px; height: 40px; }
.drop { width: 21px; display: flex; align-items: center; justify-content: center; }
.drop::before { content: ""; border: 6px solid transparent; border-top: 7px solid #000; border-bottom: 0; }
.active { background: #c6dff7; border: 1px solid #8fc0ea; }
.split.active .drop { height: 16px; align-self: center; background: #f0f5fa; }

.shadows { flex: 1; padding-right: 8px; }
.shadows .tool { width: 34px; }
.slider { flex: 1; margin-right: 15px; padding-top: 2px; }
.slider:first-of-type { margin-left: 11px; }
.slider:last-child { margin-right: 0; }
.slider input {
  appearance: none;
  display: block;
  width: 100%;
  height: 14px;
  margin: 0;
  background: none;
}
.slider input::-webkit-slider-runnable-track { height: 8px; border: 1px solid; border-color: #777 #ddd #ddd #777; }
.date::-webkit-slider-runnable-track { background: linear-gradient(90deg, #fff, #f3dc8c 18%, #edbb2c 35%, #e56a1c 52%, #e21414 68%, #ee8080 85%, #fff); }
.time::-webkit-slider-runnable-track { background: linear-gradient(90deg, #fff, #9abede 35%, #6c80ec 65%, #2c3090 82%, #060610); }
.slider input::-webkit-slider-thumb { appearance: none; width: 4px; height: 13px; margin-top: -3px; background: #f3f3f3; border: 1px solid; border-color: #fff #777 #777 #fff; }
.months, .hours { display: flex; justify-content: space-between; font: 10px/12px "Liberation Sans", "Noto Sans CJK KR", sans-serif; }
.months { padding: 0 3px; font-size: 9px; font-weight: bold; }
.months span { width: 8px; text-align: center; }

/* Work area */
.work { position: relative; display: flex; flex: 1; min-height: 0; }
.palette {
  flex: none;
  width: 90px;
  padding: 8px 2px 0;
  background: #f2f2f2 radial-gradient(circle, #b4b4b4 1px, transparent 2px) 3px 1px / 5px 4px repeat-x;
  border-right: 2px solid #7d7d7d;
}
.pgroup { display: grid; grid-template-columns: 42px 42px; }
.pgroup + .pgroup { margin-top: 2px; padding-top: 5px; border-top: 1px solid #858585; }
.pgroup:last-child { border-bottom: 1px solid #aaa; }

.viewport {
  position: relative;
  flex: 1;
  overflow: hidden;
  background: linear-gradient(#d2d7da, #eef0f0 100px, #cececc 101px);
}
.scene { display: block; width: 100%; height: 100%; }
.keycast {
  position: absolute;
  right: 64px;
  bottom: 9px;
  padding: 0 6px;
  border-radius: 5px;
  background: rgba(110, 110, 110, .72);
  box-shadow: 0 0 0 4px rgba(190, 190, 190, .6);
  color: #fff;
  font: bold 28px/46px "DejaVu Sans", sans-serif;
}
.caption-band { position: absolute; left: 0; right: 610px; bottom: 0; height: 72px; background: rgba(0, 0, 0, .42); }

/* Tray */
.tray { display: flex; flex-direction: column; flex: none; width: 302px; padding-left: 6px; background: #f1f1f1; }
.tray-title { display: flex; align-items: center; height: 24px; flex: none; padding: 0 4px; background: linear-gradient(#c2d1e0, #d9e6f3); }
.tray-title span { flex: 1; font-weight: 300; line-height: 22px; height: 24px; }
.pin { width: 10px; height: 12px; margin-right: 8px; display: flex; }
.exit { width: 12px; height: 12px; background: #b9474f; color: #fff; font-size: 14px; font-weight: bold; line-height: 12px; }
.tray-body { display: flex; flex: 1; min-height: 0; }
.panels { display: flex; flex-direction: column; flex: 1; min-width: 0; }
.head { display: flex; align-items: center; flex: none; height: 23px; margin-top: 1px; padding: 0 3px 0 9px; background: linear-gradient(#ececec, #b4b4b4); font-size: 16px; font-weight: 300; }
.tri { width: 18px; font: 11px/20px "DejaVu Sans", sans-serif; }
.head button { width: 16px; height: 16px; margin-left: auto; border: 1px solid #999; background: #eee; font: bold 13px/12px "Liberation Sans", sans-serif; }
.entity { display: flex; justify-content: space-between; align-items: flex-start; flex: none; height: 180px; padding: 0 8px 0 2px; }
.entity p { flex: 1; height: 33px; margin-right: 8px; padding-left: 9px; border-bottom: 1px solid #999; font-size: 12px; line-height: 32px; }
.toggle { width: 12px; height: 18px; margin-top: 8px; display: flex; }
.material { display: flex; flex: none; height: 94px; padding: 2px; border-bottom: 1px solid #999; }
.preview { width: 77px; height: 87px; padding: 5px 0; border: 1px solid #999; }
.preview svg { display: block; width: 75px; height: 75px; }
.material input { flex: 1; min-width: 0; height: 23px; margin: 0 5px 0 3px; padding: 0 4px; border: 1px solid; border-color: #777 #fff #fff #777; background: #f1f1f1; color: #777; font: 12px/20px "Noto Sans CJK KR", sans-serif; }
.side { display: flex; flex-direction: column; align-items: center; gap: 8px; padding-top: 3px; }
.side button, .side svg { display: block; }
.tabs { display: flex; align-items: flex-end; flex: none; height: 31px; padding-bottom: 2px; font-size: 11px; line-height: 20px; }
.tabs button { width: 47px; height: 20px; border-right: 2px solid #777; border-top: 1px solid #fff; padding-right: 12px; }
.tabs .on { width: 51px; height: 22px; padding-right: 15px; }
.dropper { width: 22px; height: 22px; margin: 0 4px 2px auto; }
.navrow { display: flex; align-items: center; flex: none; height: 35px; padding: 0 4px 3px 7px; border-bottom: 1px solid #999; }
.navrow button { display: flex; margin-right: 7px; }
.navrow svg { width: 20px; height: 20px; }
.navrow .homebtn { margin-right: 4px; }
.homebtn svg { width: 24px; height: 24px; }
.navrow .more { margin: 0 0 0 7px; }
.combo { position: relative; flex: 1; height: 27px; border: 2px solid; border-color: #777 #eee #eee #777; background: #fff; }
.combo select { appearance: none; width: 100%; height: 23px; padding: 0 3px; border: 0; background: none; font: 11px/22px "Noto Sans CJK KR", sans-serif; color: #000; }
.combo::after { content: ""; position: absolute; top: 0; right: 0; width: 20px; height: 22px; border: 1px solid; border-color: #eee #777 #777 #eee; background: #f1f1f1; }
.combo::before { content: ""; position: absolute; z-index: 1; top: 10px; right: 5px; border: 5px solid transparent; border-top-color: #000; border-bottom: 0; }
.ruled select { border-bottom: 1px solid #000; width: calc(100% - 27px); margin-left: 3px; padding: 0; }
.list { display: flex; flex: 1; min-height: 0; overflow: hidden; background: #fff; }
.short { flex: 0 0 33px; }
.swatches { display: grid; grid-template-columns: repeat(3, 62px); grid-auto-rows: 62px; gap: 2px; flex: 1; padding: 2px 3px; }
.swatches button { border: 1px solid #999; background-clip: content-box; padding: 1px; }
.folders svg { display: block; width: 40px; height: 40px; margin: 9px 11px; }
.scroll { display: flex; flex-direction: column; width: 20px; flex: none; background: #f1f1f1; }
.scroll svg { width: 20px; height: 20px; flex: none; }
.scroll i { height: 21px; background: #cdcdcd; flex: none; }
.scroll .end { margin-top: auto; }
.outer { width: 21px; padding: 3px 0 0 1px; }
.subhead { flex: none; height: 32px; padding: 7px 4px 0; border-top: 2px solid #777; border-bottom: 1px solid #999; background: linear-gradient(#f1f1f1 5px, #999 5px, #999 6px, #e4e4e4 6px); font-size: 12px; line-height: 20px; }

.c1 { background-color: #fbcdcd; } .c2 { background-color: #f99b9b; } .c3 { background-color: #f66767; }
.c4 { background-color: #f23434; } .c5 { background-color: #ef0000; } .c6 { background-color: #cc0000; }
.c7 { background-color: #990000; } .c8 { background-color: #660000; } .c9 { background-color: #fdd9cc; }
.c10 { background-color: #fab39b; } .c11 { background-color: #f98f68; } .c12 { background-color: #f76a36; }
.c13 { background-color: #f44304; } .c14 { background-color: #d0360b; } .c15 { background-color: #982707; }
.c16 { background-color: #661c04; } .c17 { background-color: #ffe6cf; } .c18 { background-color: #fbcf9b; }

/* Status bar */
.status { display: flex; align-items: center; flex: none; height: 29px; padding: 4px 5px 0 7px; background: #f1f1f1; border-top: 1px solid #ccc; }
.status svg { width: 18px; height: 18px; margin-right: 17px; }
.bar { width: 1px; height: 14px; background: #888; }
.status svg + .bar { margin-left: -4px; }
.hint { flex: 1; padding-left: 11px; font-size: 17px; font-weight: 300; }
.status label { width: 51px; padding-left: 10px; font-size: 17px; font-weight: 300; }
.status input { width: 250px; height: 25px; align-self: flex-end; padding: 1px 3px 0; border: 1px solid #b0bccc; border-bottom: 0; font: 15px/24px "Noto Sans", sans-serif; color: #000; }
```
